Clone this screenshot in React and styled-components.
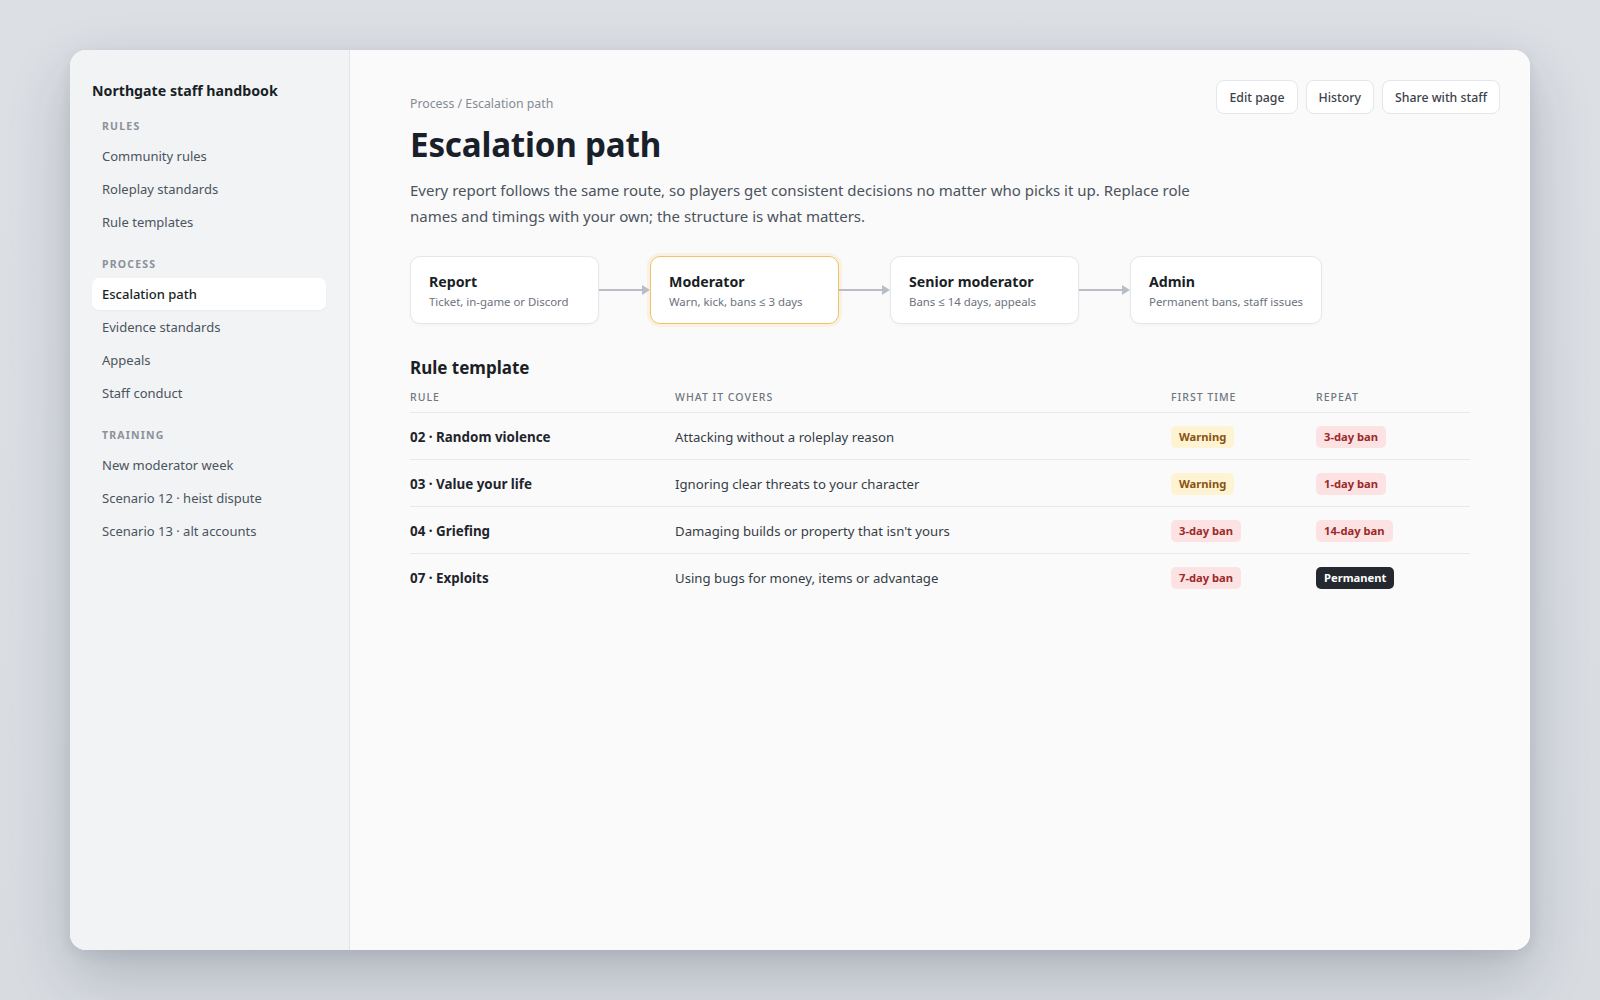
import React from "react";
import styled, { createGlobalStyle, css } from "styled-components";

const GlobalStyle = createGlobalStyle`
  * { box-sizing: border-box; }
  html, body { margin: 0; padding: 0; }
  body {
    background: #dadee3;
    font-family: "Noto Sans", "Open Sans", "DejaVu Sans", sans-serif;
    color: #1f2328;
    -webkit-font-smoothing: antialiased;
  }
`;

const Page = styled.div`
  min-height: 100vh;
  padding: 50px 70px;
  background: linear-gradient(180deg, #dcdfe4 0%, #d8dce1 100%);
`;

const Shell = styled.div`
  display: flex;
  height: 900px;
  border-radius: 16px;
  overflow: hidden;
  background: #fafafa;
  box-shadow: 0 24px 60px rgba(30, 41, 59, 0.22), 0 4px 14px rgba(30, 41, 59, 0.08);
`;

/* ---------- sidebar ---------- */

const Sidebar = styled.aside`
  width: 280px;
  flex-shrink: 0;
  background: #f1f3f5;
  border-right: 1px solid #e2e5e9;
  padding: 31px 23px 30px 22px;
  display: flex;
  flex-direction: column;
`;

const Brand = styled.div`
  font-size: 14.2px;
  line-height: 20px;
  font-weight: 700;
  color: #1a1f26;
  margin-bottom: 17px;
`;

const NavSection = styled.div`
  display: flex;
  flex-direction: column;
  gap: 1px;
  & + & { margin-top: 18px; }
`;

const NavLabel = styled.div`
  font-size: 10.5px;
  line-height: 16px;
  font-weight: 700;
  letter-spacing: 1.2px;
  text-transform: uppercase;
  color: #8b9198;
  padding-left: 10px;
  margin-bottom: 5px;
`;

const NavItem = styled.a`
  display: flex;
  align-items: center;
  height: 32px;
  padding: 0 10px;
  border-radius: 7px;
  font-size: 13px;
  color: #4b535d;
  text-decoration: none;
  cursor: pointer;
  ${(p) =>
    p.$active &&
    css`
      background: #ffffff;
      color: #1a1f26;
      font-weight: 500;
      box-shadow: 0 1px 2px rgba(15, 23, 42, 0.04);
    `}
`;

/* ---------- main ---------- */

const Main = styled.main`
  flex: 1;
  min-width: 0;
  padding: 30px;
  background: #fafafa;
`;

const Header = styled.header`
  display: flex;
  justify-content: space-between;
  align-items: flex-start;
  gap: 16px;
`;

const HeaderText = styled.div`
  flex: 1;
  min-width: 0;
  padding: 15px 0 0 30px;
`;

const Breadcrumb = styled.div`
  font-size: 12.3px;
  line-height: 18px;
  color: #858b93;
`;

const Title = styled.h1`
  margin: 12px 0 0;
  font-size: 33.2px;
  line-height: 40px;
  font-weight: 700;
  color: #19202a;
  letter-spacing: -0.2px;
`;

const Lead = styled.p`
  margin: 12px 0 0;
  max-width: 810px;
  font-size: 15px;
  line-height: 26px;
  color: #4b535d;
`;

const Toolbar = styled.div`
  display: flex;
  flex-shrink: 0;
  gap: 8px;
`;

const Button = styled.button`
  height: 34px;
  padding: 0 12px;
  border: 1px solid #e3e6ea;
  border-radius: 8px;
  background: #ffffff;
  font-family: inherit;
  font-size: 12.3px;
  font-weight: 500;
  white-space: nowrap;
  color: #3b424b;
  cursor: pointer;
`;

const Body = styled.div`
  padding: 0 30px;
`;

const Flow = styled.div`
  display: flex;
  align-items: center;
  margin-top: 27px;
`;

const Step = styled.div`
  min-width: 189px;
  height: 68px;
  padding: 1px 18px 0;
  display: flex;
  flex-direction: column;
  justify-content: center;
  gap: 1px;
  background: #ffffff;
  border: 1px solid #e4e7eb;
  border-radius: 10px;
  box-shadow: 0 1px 3px rgba(15, 23, 42, 0.04);
  ${(p) =>
    p.$current &&
    css`
      border-color: #efc26d;
      box-shadow: 0 0 0 3px rgba(245, 190, 80, 0.14);
    `}
`;

const StepName = styled.div`
  font-size: 14.2px;
  line-height: 20px;
  font-weight: 700;
  color: #1a1f26;
`;

const StepNote = styled.div`
  font-size: 11.4px;
  line-height: 17px;
  color: #6b727c;
`;

const Connector = styled.div`
  position: relative;
  width: 51px;
  height: 2px;
  flex-shrink: 0;
  &::before {
    content: "";
    position: absolute;
    left: 0;
    right: 7px;
    top: 0;
    height: 2px;
    background: #b9bec6;
  }
  &::after {
    content: "";
    position: absolute;
    right: 0;
    top: -4px;
    border-left: 8px solid #b9bec6;
    border-top: 5px solid transparent;
    border-bottom: 5px solid transparent;
  }
`;

const SectionTitle = styled.h2`
  margin: 32px 0 0;
  font-size: 17px;
  line-height: 24px;
  font-weight: 700;
  color: #1a1f26;
`;

const Table = styled.div`
  margin-top: 9px;
`;

const Row = styled.div`
  display: grid;
  grid-template-columns: 265px 1fr 145px 154px;
  align-items: center;
  border-bottom: 1px solid #e7e9ec;
  ${(p) =>
    p.$head
      ? css`
          padding-bottom: 7px;
        `
      : css`
          height: 47px;
          padding-top: 1px;
          &:last-child { border-bottom: none; }
        `}
`;

const HeadCell = styled.div`
  font-size: 10.5px;
  line-height: 16px;
  font-weight: 500;
  letter-spacing: 1px;
  text-transform: uppercase;
  color: #6f7680;
`;

const RuleName = styled.div`
  font-size: 13.4px;
  font-weight: 700;
  color: #1f252d;
`;

const RuleText = styled.div`
  font-size: 13.2px;
  color: #363d46;
`;

const badgeTones = {
  warn: css`
    background: #fef3d2;
    color: #8a5210;
  `,
  ban: css`
    background: #fde2e3;
    color: #9b2a2a;
  `,
  perm: css`
    background: #25292f;
    color: #ffffff;
  `,
};

const Badge = styled.span`
  display: inline-block;
  justify-self: start;
  padding: 2px 8px;
  border-radius: 5px;
  font-size: 11.2px;
  line-height: 18px;
  font-weight: 700;
  ${(p) => badgeTones[p.$tone]}
`;

const nav = [
  {
    label: "Rules",
    items: ["Community rules", "Roleplay standards", "Rule templates"],
  },
  {
    label: "Process",
    items: ["Escalation path", "Evidence standards", "Appeals", "Staff conduct"],
  },
  {
    label: "Training",
    items: ["New moderator week", "Scenario 12 · heist dispute", "Scenario 13 · alt accounts"],
  },
];

const steps = [
  { name: "Report", note: "Ticket, in-game or Discord" },
  { name: "Moderator", note: "Warn, kick, bans ≤ 3 days", current: true },
  { name: "Senior moderator", note: "Bans ≤ 14 days, appeals" },
  { name: "Admin", note: "Permanent bans, staff issues" },
];

const toneOf = (label) =>
  label === "Warning" ? "warn" : label === "Permanent" ? "perm" : "ban";

const rules = [
  { name: "02 · Random violence", covers: "Attacking without a roleplay reason", first: "Warning", repeat: "3-day ban" },
  { name: "03 · Value your life", covers: "Ignoring clear threats to your character", first: "Warning", repeat: "1-day ban" },
  { name: "04 · Griefing", covers: "Damaging builds or property that isn't yours", first: "3-day ban", repeat: "14-day ban" },
  { name: "07 · Exploits", covers: "Using bugs for money, items or advantage", first: "7-day ban", repeat: "Permanent" },
];

export default function App() {
  return (
    <>
      <GlobalStyle />
      <Page>
        <Shell>
          <Sidebar>
            <Brand>Northgate staff handbook</Brand>
            {nav.map((section) => (
              <NavSection key={section.label}>
                <NavLabel>{section.label}</NavLabel>
                {section.items.map((item) => (
                  <NavItem key={item} $active={item === "Escalation path"}>
                    {item}
                  </NavItem>
                ))}
              </NavSection>
            ))}
          </Sidebar>
          <Main>
            <Header>
              <HeaderText>
                <Breadcrumb>Process / Escalation path</Breadcrumb>
                <Title>Escalation path</Title>
                <Lead>
                  Every report follows the same route, so players get consistent decisions no
                  matter who picks it up. Replace role names and timings with your own; the
                  structure is what matters.
                </Lead>
              </HeaderText>
              <Toolbar>
                <Button>Edit page</Button>
                <Button>History</Button>
                <Button>Share with staff</Button>
              </Toolbar>
            </Header>
            <Body>
              <Flow>
                {steps.map((s, i) => (
                  <React.Fragment key={s.name}>
                    {i > 0 && <Connector />}
                    <Step $current={s.current}>
                      <StepName>{s.name}</StepName>
                      <StepNote>{s.note}</StepNote>
                    </Step>
                  </React.Fragment>
                ))}
              </Flow>
              <SectionTitle>Rule template</SectionTitle>
              <Table>
                <Row $head>
                  <HeadCell>Rule</HeadCell>
                  <HeadCell>What it covers</HeadCell>
                  <HeadCell>First time</HeadCell>
                  <HeadCell>Repeat</HeadCell>
                </Row>
                {rules.map((r) => (
                  <Row key={r.name}>
                    <RuleName>{r.name}</RuleName>
                    <RuleText>{r.covers}</RuleText>
                    <Badge $tone={toneOf(r.first)}>{r.first}</Badge>
                    <Badge $tone={toneOf(r.repeat)}>{r.repeat}</Badge>
                  </Row>
                ))}
              </Table>
            </Body>
          </Main>
        </Shell>
      </Page>
    </>
  );
}
